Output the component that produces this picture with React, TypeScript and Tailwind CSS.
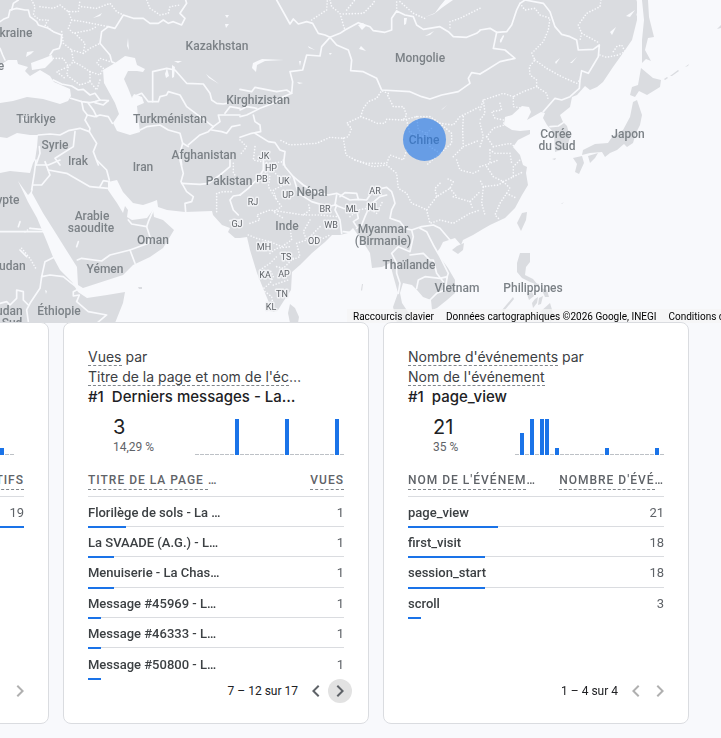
import { MdChevronLeft, MdChevronRight } from "react-icons/md";

type Row = { name: string; value: number; bar: number };

type CardData = {
  metric: string;
  dimension: string;
  dimensionCut?: boolean;
  top: string;
  total: string;
  share: string;
  days: number[];
  headName: string;
  headNameCut?: boolean;
  headValue: string;
  headValueCut?: boolean;
  rows: Row[];
  range: string;
  prev: boolean;
  next: boolean;
};

// 30 days, bar heights in px
const spark = (bars: Record<number, number>) =>
  Array.from({ length: 30 }, (_, i) => bars[i] ?? 0);

const cards: CardData[] = [
  {
    metric: "Utilisateurs actifs",
    dimension: "Ville",
    top: "Lanzhou",
    total: "19",
    share: "100 %",
    days: spark({ 25: 7 }).slice(0, 28),
    headName: "VILLE",
    headValue: "UTILISATEURS ACTIFS",
    rows: [{ name: "Lanzhou", value: 19, bar: 100 }],
    range: "1 – 1 sur 1",
    prev: false,
    next: false,
  },
  {
    metric: "Vues",
    dimension: "Titre de la page et nom de l'éc",
    dimensionCut: true,
    top: "Derniers messages - La…",
    total: "3",
    share: "14,29 %",
    days: spark({ 8: 36, 18: 36, 28: 36 }),
    headName: "TITRE DE LA PAGE ",
    headNameCut: true,
    headValue: "VUES",
    rows: [
      { name: "Florilège de sols - La …", value: 1, bar: 15 },
      { name: "La SVAADE (A.G.) - L…", value: 1, bar: 10 },
      { name: "Menuiserie - La Chas…", value: 1, bar: 10 },
      { name: "Message #45969 - L…", value: 1, bar: 5 },
      { name: "Message #46333 - L…", value: 1, bar: 5 },
      { name: "Message #50800 - L…", value: 1, bar: 5 },
    ],
    range: "7 – 12 sur 17",
    prev: true,
    next: true,
  },
  {
    metric: "Nombre d'événements",
    dimension: "Nom de l'événement",
    top: "page_view",
    total: "21",
    share: "35 %",
    days: spark({ 1: 22, 3: 36, 5: 36, 6: 36, 8: 7, 18: 7, 28: 7 }),
    headName: "NOM DE L'ÉVÉNEM",
    headNameCut: true,
    headValue: "NOMBRE D'ÉVÉ",
    headValueCut: true,
    rows: [
      { name: "page_view", value: 21, bar: 35 },
      { name: "first_visit", value: 18, bar: 30 },
      { name: "session_start", value: 18, bar: 30 },
      { name: "scroll", value: 3, bar: 5 },
    ],
    range: "1 – 4 sur 4",
    prev: false,
    next: false,
  },
];

const land = [
  // Eurasia and north-east Africa
  "0,0 637,0 637,20 632,40 623,53 613,67 603,82 597,87 590,90 585,86 577,95 572,97 570,107 560,115 563,122 567,126 570,137 567,148 555,152 554,133 547,125 543,118 545,113 541,112 527,120 531,112 529,107 522,106 512,115 505,117 504,125 512,130 520,131 530,130 530,134 518,140 513,147 520,155 523,165 527,167 526,173 528,185 522,195 515,208 505,218 490,225 483,229 473,235 463,240 461,245 455,238 443,242 440,248 437,252 440,257 448,268 455,280 455,293 447,300 437,308 432,310 431,300 423,297 417,290 412,285 403,283 400,293 402,303 408,312 413,323 397,323 393,307 398,293 393,275 390,263 382,267 372,268 370,253 365,245 358,235 353,228 348,233 340,235 332,235 325,242 312,253 300,265 292,272 291,290 283,302 278,310 273,312 265,293 257,273 250,250 247,237 240,238 235,238 228,232 230,228 222,225 213,215 212,211 185,212 167,210 158,207 157,200 152,202 143,205 133,203 123,192 117,180 108,182 108,190 117,203 123,213 125,206 128,210 127,217 132,220 147,218 153,210 154,217 163,220 174,230 168,240 163,248 150,257 133,265 123,275 83,288 78,285 77,267 65,248 55,232 43,213 32,193 33,188 30,193 28,195 18,181 28,202 37,218 47,242 53,257 60,270 72,282 78,292 87,298 107,295 125,292 123,303 115,323 0,323 0,173 10,171 30,173 33,163 35,160 37,147 38,135 30,135 17,133 7,138 0,137",
  // Sri Lanka, Hainan, Taiwan
  "290,304 295,308 299,317 298,323 290,323 288,313",
  "457,246 464,243 463,250 458,254 452,250",
  "522,213 527,212 526,220 521,231 517,223",
  // Philippines
  "520,253 530,253 530,262 526,267 525,275 533,279 538,285 530,282 522,278 517,272 517,263",
  "513,297 514,299 504,311 502,310",
  "534,283 539,284 538,287 534,286",
  "527,294 532,292 534,296 529,300",
  "535,299 538,297 537,303 533,308 532,303",
  "541,288 547,290 549,297 545,297",
  "539,298 543,296 541,304 538,305",
  "540,312 550,303 553,313 551,322 546,318",
  // Sakhalin
  "642,0 648,0 649,17 654,37 648,38 645,50 651,61 646,59 642,63 642,40 644,20",
  // Japan
  "641,68 653,78 661,80 660,87 647,95 639,91 635,97 630,95 632,87 638,85",
  "633,102 637,100 642,115 640,125 636,133 633,143 627,147 624,144 617,150 610,153 605,157 602,152 590,153 582,155 583,150 595,144 608,143 612,137 623,130 630,117",
  "588,156 598,153 595,158 590,163",
  "573,158 582,156 584,163 579,174 575,172 577,164",
  // Kuril islands and smaller ones
  "664,79 667,77 668,78 665,80",
  "670,76 678,70 679,71 672,76",
  "685,67 689,64 688,66",
  "717,29 721,25 721,28",
  "552,159 556,158 555,160",
  "561,204 564,202 562,204",
  "138,287 142,287 142,289 139,289",
  "362,284 363,284 362,291 361,290",
];

const sea = [
  // Black Sea and Azov
  "0,65 8,60 17,60 18,64 28,67 25,71 30,76 40,70 50,76 54,82 70,89 71,96 68,101 60,104 43,99 27,97 13,101 0,103",
  "31,63 42,59 52,55 53,60 45,68 32,70",
  // Caspian
  "115,63 125,56 135,58 137,65 145,69 143,72 137,71 128,71 124,79 128,88 132,98 134,94 142,97 144,103 137,106 138,117 140,132 130,135 117,131 113,123 119,114 115,103 104,83 103,70",
  // Aral, Balkhash, Baikal, Mongolian lakes
  "167,68 169,76 166,78 165,74",
  "172,65 175,67 174,77 172,78",
  "253,63 262,59 284,60 265,61 257,65 256,72 252,68",
  "425,17 435,13 440,6 445,0 453,0 443,7 434,14",
  "358,25 363,23 366,26 362,30",
  "404,18 407,18 406,24 404,25",
  "299,61 301,61 300,66",
  "93,18 102,13 100,16",
  "27,52 34,51 31,54 26,57",
  "225,15 229,15 227,18",
  "225,24 229,24 226,28",
  "206,74 219,84 209,78",
  "174,61 182,61 178,63",
  "22,118 27,118 24,122",
  "50,119 54,121 51,123",
  "555,62 560,58 556,64",
  "570,63 577,57 572,63",
  "610,32 616,27 612,35",
  "626,16 635,10 630,17",
  "500,40 503,36 501,42",
  "425,36 434,31 430,35",
  "361,46 366,51 359,49",
  "329,53 332,53 330,55",
  "308,46 315,50 309,48",
  "297,82 303,83 299,84",
  "441,110 447,105 443,109",
  "45,290 47,291 46,294",
  "128,38 129,50 127,46",
];

// line work is kept per map tile, each tile drawn at three times the size
const tiles = [
  {
    at: "translate(0 0) scale(0.3333)",
    solid: [
      "0,65 10,58 25,52 30,30 50,25 75,30 85,30 90,50 110,65 115,75 145,85 160,95 185,105 183,130 178,145 160,150 150,165",
      "0,145 8,165 15,180",
      "35,30 40,10 55,0",
      "345,190 335,185 330,165 300,130 305,95 325,80 345,85 370,45 400,55 430,55 450,70 475,70 490,60 505,70 520,65 545,75 555,55 540,40 560,10 557,0",
      "160,240 185,252 215,258 235,270 250,268 270,285 285,280 300,300 325,302",
      "212,295 245,305 270,308 285,305 300,300",
      "245,305 250,330 262,345 285,350 300,345 325,350 337,370",
      "265,310 280,330 290,350",
      "325,302 310,315 285,308",
      "262,345 255,360 270,385 268,395 290,430 280,455 295,495",
      "115,405 150,402 180,405 205,392 240,385 268,395",
      "225,395 220,440 165,475 180,495",
      "118,440 120,460 108,495",
      "400,290 425,280 445,305 475,305 480,290 500,285 505,275 540,285 560,320 600,350 640,380",
      "458,305 458,215 500,205 525,210 560,250 610,252 630,280 635,300 650,310 670,312 680,310",
      "420,390 440,380 480,375 505,390 540,400 548,430 565,440",
      "565,435 600,405 625,395 640,380",
      "548,430 540,460 545,495",
      "635,390 665,395 680,400 695,380 720,375",
      "640,380 660,365 655,345 700,345 720,345",
      "675,340 690,320 720,325",
    ],
    dotted: [
      "95,0 105,20 100,45 120,60 145,60 135,75 160,95",
      "120,20 160,25 180,15 205,35 235,35 240,0",
      "205,35 215,60 250,65 300,75 325,80",
      "215,60 205,85 220,100 270,90 290,80",
      "185,95 190,130 215,150 220,185 205,200 200,225 240,255 270,245 270,215 240,195 220,185",
      "215,150 250,160 270,145 300,130",
      "250,160 255,130 225,100",
      "160,175 190,175 205,200 170,215 195,235",
      "270,215 300,225 310,205 290,190 300,175 330,185",
      "270,245 290,270 300,240",
      "245,20 290,25 330,10 350,35 370,45",
      "440,0 450,25 480,45 505,40 510,20 540,15",
    ],
  },
  {
    at: "translate(240 0) scale(0.3333)",
    solid: [
      "110,0 150,72 160,57 175,72 200,65 218,70 235,100 255,105 270,112 300,100 315,90 355,68 390,80 400,92 435,97 455,90 455,55 470,33 495,45 520,50 530,75 550,88 600,80 625,95 640,110 680,112 710,100 720,92",
      "270,112 245,140 240,168 200,165 188,210 150,215 158,245 155,280 140,270 110,275 60,265 45,262 35,275 0,268",
      "270,112 290,135 325,150 335,180 332,212 370,215 410,235 425,270 510,275 545,290 570,297 605,285 655,275 690,250 685,235 695,218 720,222",
      "155,280 130,290 100,310 60,325 20,345 0,350",
      "40,345 45,365 60,375 62,395 35,400 0,412",
      "45,400 85,425 105,428 120,450 135,455 130,495",
      "0,330 20,320 50,325",
    ],
    dotted: [
      "445,280 425,272 410,295 385,305 370,325 362,350 320,370 335,385 325,410 310,415 270,412 230,430 150,435 120,420",
      "362,350 390,360 410,370 435,370 440,358 490,360 500,345 490,320 460,320 440,280",
      "310,415 318,465 345,480 380,490 440,490 450,465 490,480 500,450",
      "490,360 530,350 570,350 600,370 640,375 660,350 720,320",
      "670,350 668,390 670,440 720,420",
      "600,370 635,400 635,430 600,460 560,495",
      "530,350 535,390 560,400 570,440 600,460",
      "500,360 510,400 550,410 580,380",
      "640,470 660,450 670,440",
      "215,60 260,30 262,0",
      "270,0 275,20 300,40 310,75 315,90",
      "310,42 370,40 400,10 405,0",
      "320,30 345,0",
      "470,33 470,0",
      "480,5 520,40 560,58",
      "720,25 660,55 630,65 630,85",
      "0,420 20,440 0,465",
      "45,440 40,480 90,490 130,485",
    ],
  },
  {
    at: "translate(480 0) scale(0.3333)",
    solid: [
      "0,90 30,85 50,97 80,95 95,75 110,30 120,10 135,0",
      "135,0 190,10 210,35 225,80 245,103 270,110 290,120 295,150 340,148 358,135 355,170 340,195 325,220 305,212 300,240 298,265 270,290 245,300 225,295 190,335",
      "50,97 40,145 75,150 105,175 60,185 20,210 0,222",
      "210,380 235,378 250,368",
      "70,108 62,125",
      "472,0 478,20 472,45",
    ],
    dotted: [
      "120,10 135,30 165,25 180,45 210,55 205,90 190,125 155,160 165,180 148,200 150,225 170,240 170,260 200,280 205,300",
      "165,180 200,205 245,230 290,250 300,240",
      "170,260 130,275 100,290 100,320 130,325",
      "100,290 70,280 40,290 10,300 0,330",
      "363,0 360,20 320,40 295,75 305,100 360,130",
      "305,100 300,120",
      "360,165 380,172 415,165 435,155 425,135 410,140 400,155",
      "60,310 65,330 35,335 45,355 70,360 72,375",
      "0,370 10,410 0,440",
      "20,410 40,385 72,375",
      "20,410 40,440 90,430 105,440",
      "30,450 45,460 90,460 95,490",
      "10,300 15,340 0,360",
      "30,450 30,490",
    ],
  },
  {
    at: "translate(0 160) scale(0.3333)",
    solid: [
      "108,0 103,40 95,90",
      "110,15 145,15 180,0",
      "135,5 150,45 125,75 100,75",
      "145,30 200,40 270,80 325,85",
      "300,80 310,62 328,65",
      "290,0 320,30 328,60",
      "0,215 130,215",
      "232,300 245,295 305,303 330,285 390,270 445,250 450,230 440,200 395,192 385,180",
      "440,200 445,185 460,150",
      "390,270 405,310",
      "165,290 135,305 125,350 150,345 190,350 215,370 235,385",
      "125,350 120,385 90,430 80,450 85,485",
      "240,385 220,395 220,408 238,405 230,425 265,455 320,465 290,490",
      "0,430 20,425 30,435 50,415 50,390 70,395 70,420 85,435",
      "540,0 550,40 543,65 560,95 580,110 575,125 555,130 557,155",
      "545,70 600,73 625,70 660,45 690,20 690,0",
      "720,105 700,108 690,120 700,150 715,165",
      "690,182 720,180",
      "60,270 80,290",
      "235,245 230,260",
      "90,205 125,208",
      "60,185 55,200",
    ],
    dotted: [
      "650,155 650,100 670,95 695,95",
      "700,10 700,40 715,55",
      "75,215 90,205",
      "65,265 90,295 110,330",
    ],
  },
  {
    at: "translate(240 160) scale(0.3333)",
    solid: [
      "130,0 135,20 160,50 190,75 225,95 265,105 290,100 330,120 355,118 380,120 400,90 440,82 455,95 460,110 465,130 455,150 450,175 480,185 495,205 515,210 530,205 545,200 580,195 600,205 630,240",
      "160,50 175,100 215,125 265,140 285,135 290,105",
      "300,110 315,98 350,100 355,118",
      "290,135 285,150 300,180 305,220",
      "285,135 310,145 350,150 355,175 340,185 350,200",
      "440,105 420,110 390,135 375,170 365,195 350,205",
      "515,210 520,230 510,275 475,260 455,280 470,310 470,340 480,370 475,400",
      "510,285 550,280 570,300 580,300 590,340 610,365",
      "540,205 560,215 570,235 580,255 600,290 625,340 620,355",
      "530,385 535,360 555,350 600,355 622,350 615,390 590,400 570,420",
      "0,105 25,85 50,60 70,30 70,0",
      "310,215 330,217",
    ],
    dotted: [
      "345,0 400,20 440,15 470,40 475,85 500,100 515,130 540,140 560,150 590,110 630,85 640,65 620,55",
      "560,150 570,190 600,180 640,190 690,160 720,150",
      "600,70 585,85 590,110",
      "640,110 690,125 720,95",
      "690,125 700,150",
      "650,0 660,30 700,40 720,30",
      "630,85 650,110",
      "90,20 110,45 140,70 100,90 110,120 125,140 100,155 130,175",
      "70,30 90,50 85,80 110,120",
      "30,190 60,180 50,165 90,150 125,155 190,165 210,150 205,130",
      "190,165 240,165 290,170",
      "210,180 190,215 200,240 170,250 180,290 155,300",
      "25,225 50,235 90,245 125,260 155,240 150,200 180,190",
      "240,200 215,225 250,235 270,225",
      "90,280 110,265 150,260",
      "60,330 90,310 110,290",
      "110,320 130,325 165,290",
      "65,390 90,370 100,350 90,330",
      "100,375 145,360",
      "75,395 95,410 100,440",
      "380,140 410,160 430,120",
      "330,170 355,150 380,145",
    ],
  },
  {
    at: "translate(480 160) scale(0.3333)",
    solid: [],
    dotted: [
      "0,20 30,10 55,0",
      "20,20 40,50 70,65 55,75 10,80 5,130 15,165",
      "70,65 100,50 100,20 120,0",
      "70,65 90,85 80,100 60,130 45,165 60,180",
      "80,100 110,115",
      "100,50 130,35",
      "10,80 0,60",
    ],
  },
];

const countries: [string, number, number][] = [
  ["kraine", 16, 37],
  ["e", 1, 70],
  ["Kazakhstan", 217, 50],
  ["Mongolie", 420, 62],
  ["Kirghizistan", 258, 104],
  ["Türkiye", 36, 123],
  ["Turkménistan", 170, 123],
  ["Syrie", 55, 149],
  ["Irak", 78, 165],
  ["Iran", 143, 171],
  ["Afghanistan", 204, 159],
  ["Pakistan", 229, 185],
  ["Népal", 312, 196],
  ["Inde", 287, 230],
  ["Chine", 424, 144],
  ["Corée", 556, 138],
  ["du Sud", 557, 150],
  ["Japon", 628, 138],
  ["Arabie", 92, 220],
  ["saoudite", 91, 232],
  ["Oman", 153, 244],
  ["Yémen", 105, 273],
  ["Éthiopie", 59, 315],
  ["ypte", 8, 204],
  ["oudan", 9, 270],
  ["oudan", 6, 315],
  ["Sud", 12, 327],
  ["Myanmar", 383, 233],
  ["(Birmanie)", 383, 245],
  ["Thaïlande", 409, 269],
  ["Vietnam", 457, 292],
  ["Philippines", 533, 292],
];

const states: [string, number, number][] = [
  ["JK", 264, 159],
  ["HP", 271, 171],
  ["PB", 262, 182],
  ["UK", 284, 184],
  ["UP", 288, 198],
  ["RJ", 253, 205],
  ["GJ", 237, 227],
  ["BR", 325, 212],
  ["ML", 352, 212],
  ["NL", 373, 210],
  ["AR", 375, 194],
  ["WB", 331, 228],
  ["OD", 314, 244],
  ["MH", 264, 250],
  ["TS", 286, 260],
  ["KA", 265, 278],
  ["AP", 284, 277],
  ["TN", 282, 297],
  ["KL", 271, 310],
];

function WorldMap() {
  return (
    <svg
      viewBox="0 0 721 323"
      preserveAspectRatio="xMidYMin slice"
      className="block w-full h-full will-change-transform"
      role="img"
      aria-label="Carte"
    >
      {land.map((p) => (
        <polygon key={p} points={p} fill="#dadce0" />
      ))}
      {sea.map((p) => (
        <polygon key={p} points={p} fill="#f8f9fc" />
      ))}
      {tiles.map((tile) => (
        <g
          key={tile.at}
          transform={tile.at}
          fill="none"
          stroke="#f8f9fc"
          strokeLinejoin="round"
          strokeLinecap="round"
          strokeWidth="5"
        >
          {tile.solid.map((p) => (
            <polyline key={p} points={p} />
          ))}
          {tile.dotted.map((p) => (
            <polyline key={p} points={p} strokeDasharray="0 9" />
          ))}
        </g>
      ))}
      <g textAnchor="middle" className="font-medium text-[12px]" fill="#7c8287">
        {countries.map(([name, x, y], i) => (
          <text key={i} x={x} y={y}>
            {name}
          </text>
        ))}
      </g>
      <g
        textAnchor="middle"
        stroke="#f1f2f5"
        strokeWidth="3"
        strokeLinejoin="round"
        paintOrder="stroke"
        className="text-[9px]"
        fill="#5f6368"
      >
        {states.map(([name, x, y]) => (
          <text key={name} x={x} y={y}>
            {name}
          </text>
        ))}
      </g>
      <circle cx="424.5" cy="139.5" r="21.5" fill="#1a73e8" fillOpacity="0.6" />
    </svg>
  );
}

function Sparkline({ days }: { days: number[] }) {
  return (
    <svg width="149" height="36" className="block shrink-0" aria-hidden="true">
      {days.map((h, i) =>
        h > 0 ? (
          <rect key={i} x={i * 5} y={36 - h} width="4" height={h} fill="#1a73e8" />
        ) : (
          <rect key={i} x={i * 5} y="35" width="4" height="1" fill="#bdc1c6" />
        )
      )}
    </svg>
  );
}

function Card({ card }: { card: CardData }) {
  return (
    <section className="flex flex-col min-w-0 bg-white border border-[#dadce0] rounded-lg px-6 pt-6 pb-5">
      <div className="font-['Inter',sans-serif] text-[14px] leading-5 text-[#3c4043] whitespace-nowrap">
        <div>
          <button className="leading-4 border-b border-dashed border-[#80868b]">{card.metric}</button> par
        </div>
        <div>
          <button className="leading-4 border-b border-dashed border-[#80868b]">{card.dimension}</button>
          {card.dimensionCut && "…"}
        </div>
        <h2 className="flex gap-2 text-[15px] font-medium text-[#202124]">
          <span>#1</span>
          <span>{card.top}</span>
        </h2>
      </div>

      <div className="flex justify-between items-end mt-2 pl-[25px]">
        <div>
          <p className="font-['Inter',sans-serif] text-[20px] leading-6 text-[#202124]">{card.total}</p>
          <p className="text-[12px] leading-4 text-[#5f6368]">{card.share}</p>
        </div>
        <Sparkline days={card.days} />
      </div>

      <table className="w-full mt-4 border-separate border-spacing-0 whitespace-nowrap">
        <thead>
          <tr className="h-[26px] align-top text-[12px] leading-[18px] tracking-[1px] text-[#5f6368]">
            <th className="p-0 text-left font-medium border-b border-[#dadce0]">
              <button className="uppercase tracking-[1px] border-b border-dashed border-[#80868b] whitespace-pre">
                {card.headName}
              </button>
              {card.headNameCut && "…"}
            </th>
            <th className="p-0 text-right font-medium border-b border-[#dadce0]">
              <button className="uppercase tracking-[1px] border-b border-dashed border-[#80868b]">
                {card.headValue}
              </button>
              {card.headValueCut && "…"}
            </th>
          </tr>
        </thead>
        <tbody>
          {card.rows.map((row, i) => (
            <tr
              key={row.name}
              className="relative h-[30px] nth-[3n]:h-[31px] text-[13px] leading-5 text-[#3c4043] [&:not(:last-child)>td]:border-b"
            >
              <td className="p-0 pt-[2px] font-medium border-[#dadce0]">
                {row.name}
                <span
                  className="absolute left-0 -bottom-px h-[2px] bg-[#1a73e8]"
                  style={{ width: `${row.bar}%` }}
                />
              </td>
              <td className="p-0 pt-[2px] text-right text-[#5f6368] border-[#dadce0]">{row.value}</td>
            </tr>
          ))}
        </tbody>
      </table>

      <div className="flex items-center justify-end mt-auto -mr-2 text-[12px] text-[#202124]">
        <span className="mr-[6px]">{card.range}</span>
        <button
          disabled={!card.prev}
          aria-label="Précédent"
          className="flex items-center justify-center size-6 rounded-full text-[#5f6368] disabled:text-[#b0b0b0]"
        >
          <MdChevronLeft size={24} />
        </button>
        <button
          disabled={!card.next}
          aria-label="Suivant"
          className="flex items-center justify-center size-6 rounded-full bg-[#e2e2e2] text-[#5f6368] disabled:bg-transparent disabled:text-[#b0b0b0]"
        >
          <MdChevronRight size={24} />
        </button>
      </div>
    </section>
  );
}

export default function App() {
  return (
    <div className="min-h-screen overflow-hidden bg-[#f8f9fc] font-['Roboto',sans-serif]">
      <div className="relative h-[323px] overflow-hidden">
        <WorldMap />
        <div className="absolute bottom-0 left-[347px] right-0 flex overflow-hidden whitespace-nowrap pt-[2px] text-[10px] leading-3 text-black bg-[#f5f5f5]/70">
          <button className="shrink-0 px-[6px]">Raccourcis clavier</button>
          <span className="shrink-0 px-[6px]">Données cartographiques ©2026 Google, INEGI</span>
          <a href="#conditions" className="shrink-0 px-[6px]">
            Conditions d'utilisation
          </a>
        </div>
      </div>

      <div className="relative grid grid-cols-3 gap-[14px] min-h-[402px] -mt-px -ml-[257px] mr-8">
        {cards.map((card) => (
          <Card key={card.metric} card={card} />
        ))}
      </div>
    </div>
  );
}
